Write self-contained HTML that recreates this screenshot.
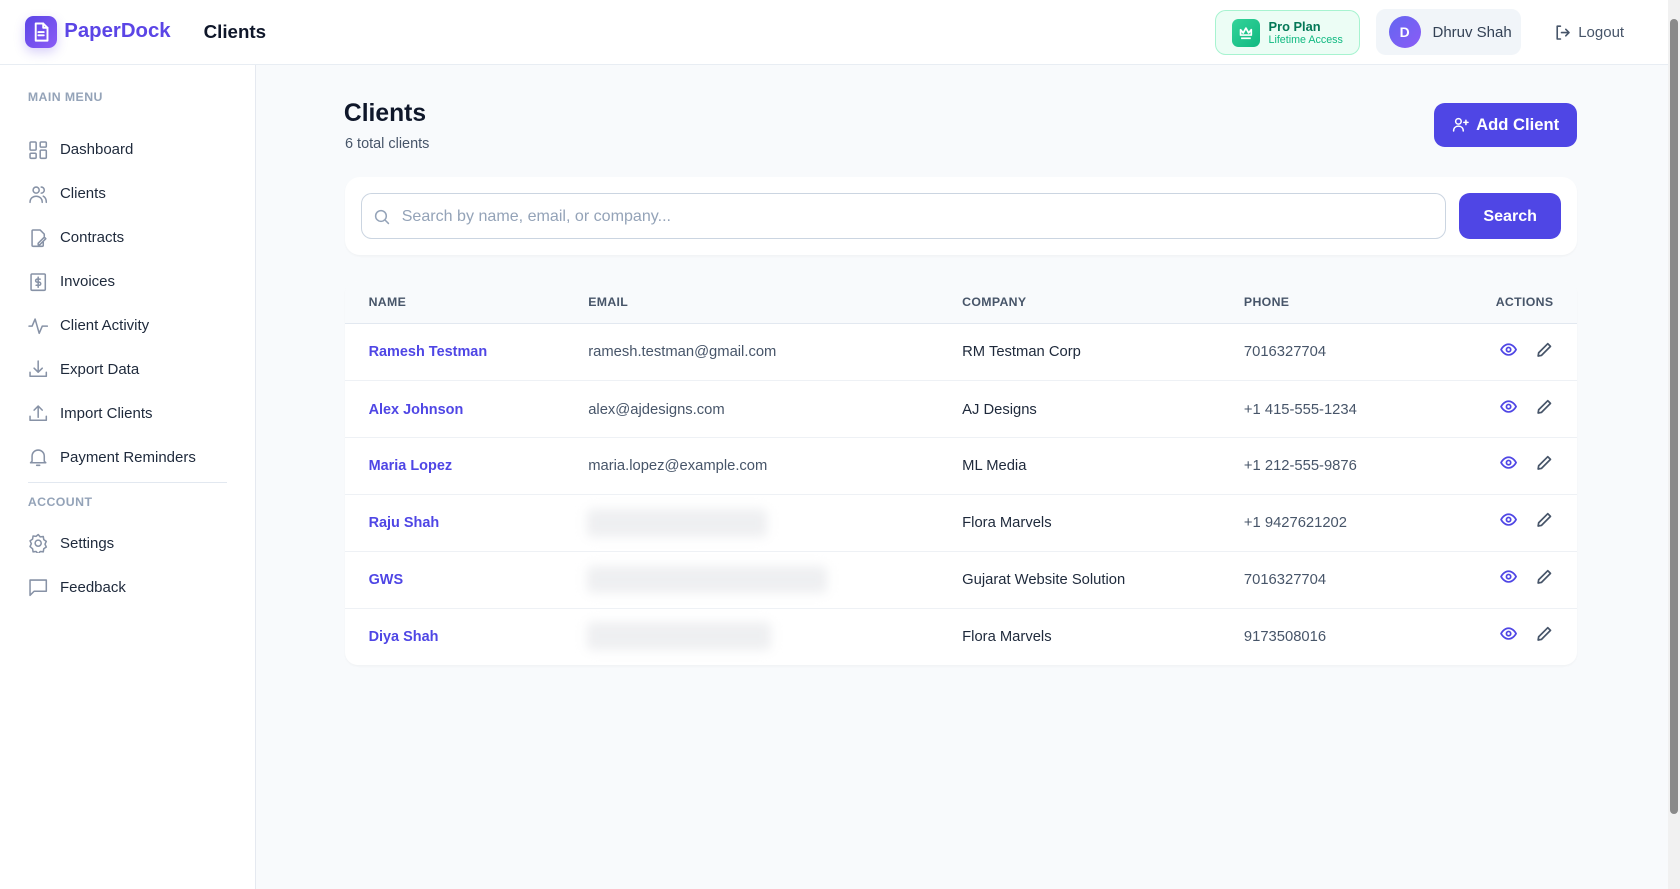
<!DOCTYPE html>
<html><head><meta charset="utf-8"><style>
html{zoom:1.07143}
*{box-sizing:border-box;margin:0;padding:0}
body{width:1568px;height:830px;overflow:hidden;font-family:"Liberation Sans",sans-serif;background:#f8fafc;color:#0f172a;position:relative}
.abs{position:absolute}
header{position:absolute;left:0;top:0;width:1557px;height:61px;background:#fff;border-bottom:1px solid #e8edf3}
aside{position:absolute;left:0;top:61px;width:239px;height:769px;background:#fff;border-right:1px solid #e5e9f0}
.sb{position:absolute;right:0;top:0;width:11px;height:830px;background:#f1f1f1}
.sb i{position:absolute;left:2px;top:18px;width:7px;height:742px;background:#8a8a8a;border-radius:4px}
.lbl{position:absolute;left:26px;font-size:11.5px;font-weight:bold;color:#94a3b8;letter-spacing:.4px}
.it{position:absolute;left:26px;height:20px;display:flex;align-items:center;font-size:14px;color:#1e293b}
.it svg{width:19px;height:19px;margin-right:11px;fill:none;stroke:#8792a6;stroke-width:1.5;stroke-linecap:round;stroke-linejoin:round}
.card{position:absolute;background:#fff;border-radius:14px;box-shadow:0 1px 2px rgba(0,0,0,.03)}
.th{position:absolute;top:275px;font-size:11.5px;font-weight:bold;color:#475569;letter-spacing:.3px}
.row{position:absolute;left:322px;width:1150px;height:53px;border-top:1px solid #eef1f5;font-size:14px}
.row span{position:absolute;top:19px}
.nm{left:22px;color:#4f46e5;font-weight:bold;font-size:13.5px}
.em{left:227px;color:#475569;font-size:13.8px}
.co{left:576px;color:#1e293b;font-size:13.8px}
.ph{left:839px;color:#475569;font-size:13.8px}
.blur{position:absolute;top:13px;height:26px;background:#eeeff1;filter:blur(5px);border-radius:4px}
.ic{position:absolute;top:17px;width:16px;height:16px;fill:none;stroke-width:1.6;stroke-linecap:round;stroke-linejoin:round}
</style></head><body>
<header>
 <div class="abs" style="left:23px;top:15px;width:30px;height:30px;border-radius:8px;background:linear-gradient(135deg,#5b45e6,#8b5cf6);box-shadow:0 4px 10px rgba(99,70,230,.25)">
  <svg width="30" height="30" viewBox="0 0 30 30" fill="none" stroke="#fff" stroke-width="1.8" stroke-linejoin="round" stroke-linecap="round"><path d="M10 7h7l4 4v12H10z"/><path d="M17 7v4h4M12.5 15h5M12.5 18h5"/></svg>
 </div>
 <div class="abs" style="left:60px;top:19px;font-size:19px;font-weight:bold;color:#5b45e6">PaperDock</div>
 <div class="abs" style="left:190px;top:20px;font-size:17.5px;font-weight:bold;color:#0f172a">Clients</div>
 <div class="abs" style="left:1134px;top:9px;width:135px;height:42px;border:1px solid #a7f3d0;background:#ecfdf5;border-radius:10px">
  <div class="abs" style="left:15px;top:8px;width:26px;height:26px;border-radius:6px;background:linear-gradient(135deg,#34d399,#10b981)">
   <svg width="26" height="26" viewBox="0 0 26 26" fill="none" stroke="#fff" stroke-width="1.6" stroke-linejoin="round"><path d="M8 10l2.5 3L13 8.5l2.5 4.5L18 10v5H8z"/><path d="M8.5 18h9"/></svg>
  </div>
  <div class="abs" style="left:49px;top:8px;font-size:12px;font-weight:bold;color:#047857">Pro Plan</div>
  <div class="abs" style="left:49px;top:22px;font-size:10px;color:#10b981">Lifetime Access</div>
 </div>
 <div class="abs" style="left:1284px;top:8px;width:136px;height:43px;background:#f1f5f9;border-radius:9px">
  <div class="abs" style="left:12px;top:7px;width:30px;height:30px;border-radius:50%;background:linear-gradient(135deg,#6366f1,#8b5cf6);color:#fff;font-size:13px;font-weight:bold;text-align:center;line-height:30px">D</div>
  <div class="abs" style="left:53px;top:14px;font-size:14px;color:#334155">Dhruv Shah</div>
 </div>
 <svg class="abs" style="left:1450px;top:22px" width="16" height="16" viewBox="0 0 16 16" fill="none" stroke="#475569" stroke-width="1.5" stroke-linecap="round" stroke-linejoin="round"><path d="M6 2H3v12h3M7 8h7M11 5l3 3-3 3"/></svg>
 <div class="abs" style="left:1473px;top:22px;font-size:14px;color:#475569">Logout</div>
</header>
<aside>
 <div class="lbl" style="top:23px">MAIN MENU</div>
 <div class="it" style="top:69px"><svg viewBox="0 0 20 20"><rect x="2" y="2" width="6" height="8" rx="1"/><rect x="12" y="2" width="6" height="5" rx="1"/><rect x="2" y="13" width="6" height="5" rx="1"/><rect x="12" y="10" width="6" height="8" rx="1"/></svg>Dashboard</div>
 <div class="it" style="top:110px"><svg viewBox="0 0 20 20"><circle cx="8" cy="6" r="3"/><path d="M2 18c0-4 3-6 6-6s6 2 6 6M13 3a3 3 0 010 6M15 12c2 1 3 3 3 6"/></svg>Clients</div>
 <div class="it" style="top:151px"><svg viewBox="0 0 20 20"><path d="M12 2H5a1 1 0 00-1 1v14a1 1 0 001 1h9a1 1 0 001-1v-3M12 2l4 4v2"/><path d="M10 15l6-6 1.5 1.5-6 6H10z"/></svg>Contracts</div>
 <div class="it" style="top:192px"><svg viewBox="0 0 20 20"><rect x="3" y="2" width="14" height="16" rx="1"/><path d="M12 7h-3a1.5 1.5 0 000 3h2a1.5 1.5 0 010 3H8M10 5v10"/></svg>Invoices</div>
 <div class="it" style="top:233px"><svg viewBox="0 0 20 20"><path d="M1 10h3l3-7 4 14 3-7h5"/></svg>Client Activity</div>
 <div class="it" style="top:274px"><svg viewBox="0 0 20 20"><path d="M10 2v11M6 9l4 4 4-4M2 13v4h16v-4"/></svg>Export Data</div>
 <div class="it" style="top:315px"><svg viewBox="0 0 20 20"><path d="M10 14V3M6 7l4-4 4 4M2 13v4h16v-4"/></svg>Import Clients</div>
 <div class="it" style="top:356px"><svg viewBox="0 0 20 20"><path d="M4 14V9a6 6 0 0112 0v5l1.5 1.5h-15zM8.5 18h3"/></svg>Payment Reminders</div>
 <div class="abs" style="left:26px;top:389px;width:186px;height:1px;background:#e2e8f0"></div>
 <div class="lbl" style="top:401px">ACCOUNT</div>
 <div class="it" style="top:436px"><svg viewBox="0 0 20 20"><circle cx="10" cy="10" r="3"/><path d="M10 1.5l2 2.3 3-.3.5 3 2.5 1.7-1.3 2.8 1.3 2.8-2.5 1.7-.5 3-3-.3-2 2.3-2-2.3-3 .3-.5-3L2 13.3l1.3-2.8L2 7.7l2.5-1.7.5-3 3 .3z"/></svg>Settings</div>
 <div class="it" style="top:477px"><svg viewBox="0 0 20 20"><path d="M2 3h16v11H6l-4 4z"/></svg>Feedback</div>
</aside>
<div class="abs" style="left:321px;top:93px;font-size:23px;font-weight:bold;color:#0f172a">Clients</div>
<div class="abs" style="left:322px;top:127px;font-size:13.5px;color:#475569">6 total clients</div>
<div class="abs" style="left:1338px;top:96px;width:134px;height:41px;border-radius:10px;background:#4f46e5;color:#fff;font-size:15.5px;font-weight:bold;display:flex;align-items:center;justify-content:center">
 <svg width="16" height="16" viewBox="0 0 16 16" fill="none" stroke="#fff" stroke-width="1.4" stroke-linecap="round" style="margin-right:7px"><circle cx="6" cy="5" r="2.6"/><path d="M1.5 14c0-3 2-4.5 4.5-4.5S10.5 11 10.5 14M13 4v4M11 6h4"/></svg>Add Client</div>
<div class="card" style="left:322px;top:165px;width:1150px;height:73px"></div>
<div class="abs" style="left:337px;top:180px;width:1013px;height:43px;border:1px solid #cbd5e1;border-radius:10px;background:#fff">
 <svg class="abs" style="left:11px;top:14px" width="15" height="15" viewBox="0 0 15 15" fill="none" stroke="#94a3b8" stroke-width="1.4" stroke-linecap="round"><circle cx="6.5" cy="6.5" r="5"/><path d="M10.5 10.5l3 3"/></svg>
 <div class="abs" style="left:37px;top:12px;font-size:15px;color:#94a3b8">Search by name, email, or company...</div>
</div>
<div class="abs" style="left:1362px;top:180px;width:95px;height:43px;border-radius:10px;background:#4f46e5;color:#fff;font-size:15px;font-weight:bold;text-align:center;line-height:43px">Search</div>
<div class="card" style="left:322px;top:262px;width:1150px;height:359px;border-radius:12px;overflow:hidden">
 <div style="height:40px;background:#f8fafc;border-bottom:1px solid #e2e8f0"></div>
</div>
<div class="th" style="left:344px">NAME</div>
<div class="th" style="left:549px">EMAIL</div>
<div class="th" style="left:898px">COMPANY</div>
<div class="th" style="left:1161px">PHONE</div>
<div class="th" style="left:1396px">ACTIONS</div>

<div class="row" style="top:302px;border-top:none"><span class="nm">Ramesh Testman</span><span class="em">ramesh.testman@gmail.com</span><span class="co">RM Testman Corp</span><span class="ph">7016327704</span></div>
<div class="row" style="top:355px"><span class="nm">Alex Johnson</span><span class="em">alex@ajdesigns.com</span><span class="co">AJ Designs</span><span class="ph">+1 415-555-1234</span></div>
<div class="row" style="top:408px"><span class="nm">Maria Lopez</span><span class="em">maria.lopez@example.com</span><span class="co">ML Media</span><span class="ph">+1 212-555-9876</span></div>
<div class="row" style="top:461px"><span class="nm">Raju Shah</span><div class="blur" style="left:226px;width:168px"></div><span class="co">Flora Marvels</span><span class="ph">+1 9427621202</span></div>
<div class="row" style="top:514px"><span class="nm">GWS</span><div class="blur" style="left:226px;width:224px"></div><span class="co">Gujarat Website Solution</span><span class="ph">7016327704</span></div>
<div class="row" style="top:567px"><span class="nm">Diya Shah</span><div class="blur" style="left:226px;width:172px"></div><span class="co">Flora Marvels</span><span class="ph">9173508016</span></div>

<svg width="0" height="0" style="position:absolute"><defs>
<g id="eye"><path d="M1 8s2.5-5 7-5 7 5 7 5-2.5 5-7 5-7-5-7-5z"/><circle cx="8" cy="8" r="2"/></g>
<g id="pen"><path d="M11 2.5l2.5 2.5L5 13.5 2 14l.5-3z"/></g>
</defs></svg>
<div class="abs" style="left:0;top:0">
 <svg class="ic" style="left:1400px;top:318px;stroke:#4f46e5" viewBox="0 0 16 16"><use href="#eye"/></svg><svg class="ic" style="left:1434px;top:318px;stroke:#475569" viewBox="0 0 16 16"><use href="#pen"/></svg>
 <svg class="ic" style="left:1400px;top:371px;stroke:#4f46e5" viewBox="0 0 16 16"><use href="#eye"/></svg><svg class="ic" style="left:1434px;top:371px;stroke:#475569" viewBox="0 0 16 16"><use href="#pen"/></svg>
 <svg class="ic" style="left:1400px;top:424px;stroke:#4f46e5" viewBox="0 0 16 16"><use href="#eye"/></svg><svg class="ic" style="left:1434px;top:424px;stroke:#475569" viewBox="0 0 16 16"><use href="#pen"/></svg>
 <svg class="ic" style="left:1400px;top:477px;stroke:#4f46e5" viewBox="0 0 16 16"><use href="#eye"/></svg><svg class="ic" style="left:1434px;top:477px;stroke:#475569" viewBox="0 0 16 16"><use href="#pen"/></svg>
 <svg class="ic" style="left:1400px;top:530px;stroke:#4f46e5" viewBox="0 0 16 16"><use href="#eye"/></svg><svg class="ic" style="left:1434px;top:530px;stroke:#475569" viewBox="0 0 16 16"><use href="#pen"/></svg>
 <svg class="ic" style="left:1400px;top:583px;stroke:#4f46e5" viewBox="0 0 16 16"><use href="#eye"/></svg><svg class="ic" style="left:1434px;top:583px;stroke:#475569" viewBox="0 0 16 16"><use href="#pen"/></svg>
</div>
<div class="sb"><i></i></div>
</body></html>
